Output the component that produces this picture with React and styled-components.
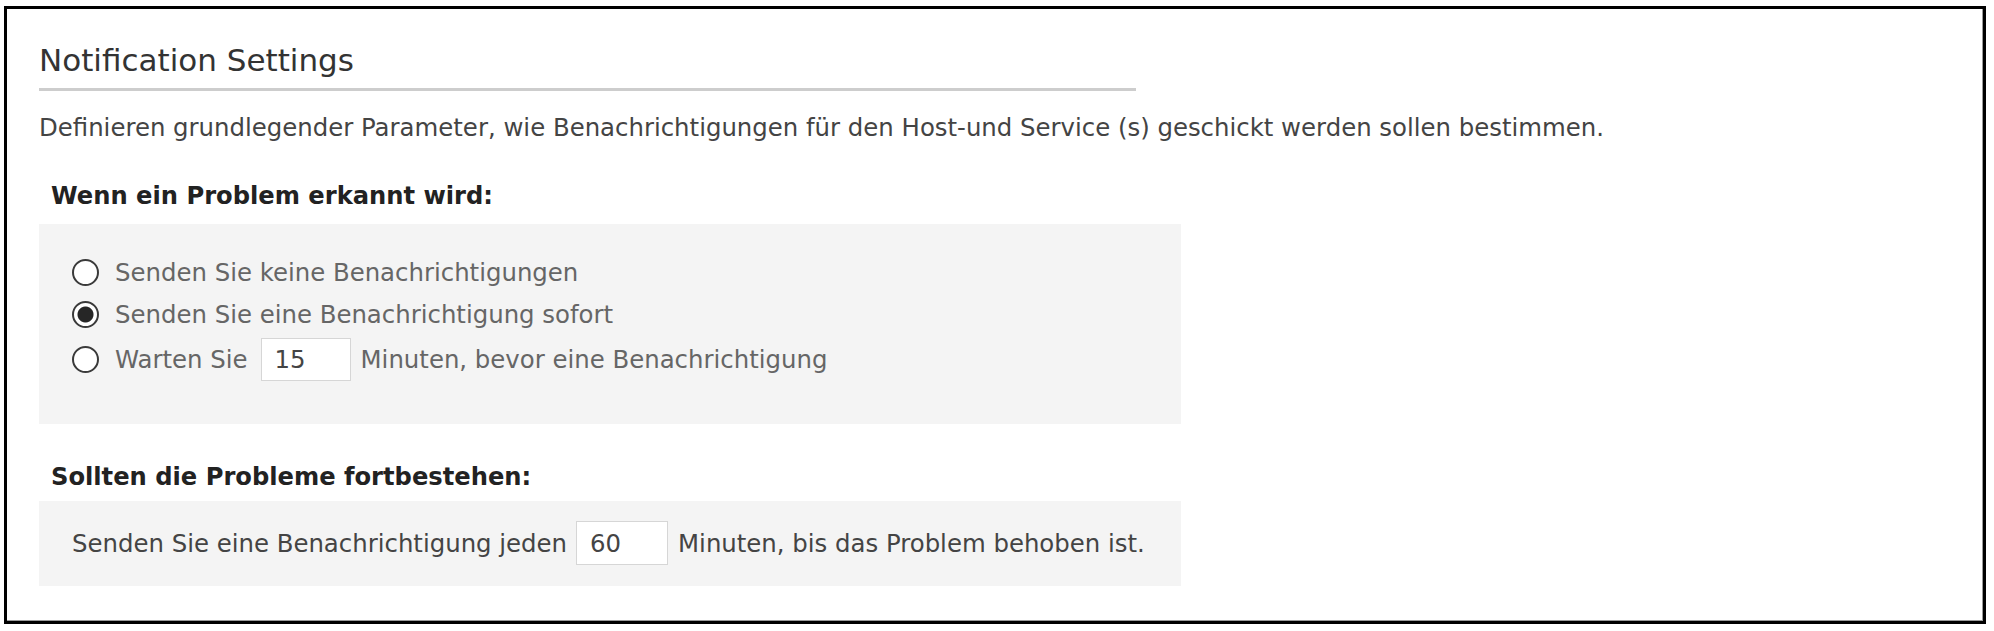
import styled, { createGlobalStyle } from 'styled-components';

const GlobalStyle = createGlobalStyle`
    body {
        margin: 0;
        background: #fff;
        font-family: "DejaVu Sans", Verdana, sans-serif;
    }
`;

const Frame = styled.div`
    box-sizing: border-box;
    width: 1982px;
    height: 618px;
    margin: 6px 0 0 4px;
    border: 3px solid #000;
    box-shadow: inset -1px -1px 0 #9a9a9a;
    padding: 33px 0 0 32px;
`;

const Heading = styled.h2`
    width: 1097px;
    margin: 0;
    padding-bottom: 10px;
    border-bottom: 3px solid #cdcdcd;
    font-size: 31px;
    font-weight: normal;
    line-height: 36px;
    color: #333;
`;

const Description = styled.p`
    margin: 23px 0 0;
    font-size: 24.4px;
    line-height: 28px;
    color: #444;
`;

const Label = styled.h4`
    margin: ${({ $top }) => $top}px 0 0 12px;
    font-size: 24.2px;
    font-weight: bold;
    line-height: 28px;
    color: #222;
`;

const Panel = styled.div`
    box-sizing: border-box;
    width: 1142px;
    margin-top: ${({ $top }) => $top}px;
    padding: ${({ $pad }) => $pad};
    background: #f4f4f4;
    display: flex;
    flex-direction: column;
`;

const Row = styled.label`
    display: flex;
    align-items: center;
    min-height: ${({ $h }) => $h}px;
    font-size: 24.4px;
    color: ${({ $muted }) => ($muted ? '#666' : '#444')};
`;

const Radio = styled.input.attrs({ type: 'radio', name: 'when' })`
    appearance: none;
    box-sizing: border-box;
    width: 27px;
    height: 27px;
    margin: 0 16px 0 0;
    border: 2px solid #3a3a3a;
    border-radius: 50%;
    background: #fff;
    flex-shrink: 0;

    &:checked {
        background: radial-gradient(circle, #262626 0 7.5px, #fff 8.5px);
    }
`;

const Minutes = styled.input.attrs({ type: 'text' })`
    box-sizing: border-box;
    width: ${({ $w }) => $w}px;
    height: ${({ $h }) => $h}px;
    margin: 0 10px 0 ${({ $gap }) => $gap}px;
    padding: 0 0 0 13px;
    border: 1px solid #d6d6d6;
    background: #fff;
    font-family: inherit;
    font-size: 24.4px;
    color: #444;
`;

const App = () => {
    return (
        <>
            <GlobalStyle />
            <Frame>
                <Heading>Notification Settings</Heading>
                <Description>
                    Definieren grundlegender Parameter, wie Benachrichtigungen für den Host-und Service (s) geschickt werden sollen bestimmen.
                </Description>

                <Label $top={40}>Wenn ein Problem erkannt wird:</Label>
                <Panel $top={14} $pad="27px 0 40px 33px">
                    <Row $h={42} $muted>
                        <Radio />
                        Senden Sie keine Benachrichtigungen
                    </Row>
                    <Row $h={42} $muted>
                        <Radio defaultChecked />
                        Senden Sie eine Benachrichtigung sofort
                    </Row>
                    <Row $h={49} $muted>
                        <Radio />
                        Warten Sie
                        <Minutes $gap={13} $w={90} $h={43} defaultValue="15" />
                        Minuten, bevor eine Benachrichtigung
                    </Row>
                </Panel>

                <Label $top={39}>Sollten die Probleme fortbestehen:</Label>
                <Panel $top={10} $pad="20px 0 21px 33px">
                    <Row $h={44}>
                        Senden Sie eine Benachrichtigung jeden
                        <Minutes $gap={9} $w={92} $h={44} defaultValue="60" />
                        Minuten, bis das Problem behoben ist.
                    </Row>
                </Panel>
            </Frame>
        </>
    );
};

export default App;
